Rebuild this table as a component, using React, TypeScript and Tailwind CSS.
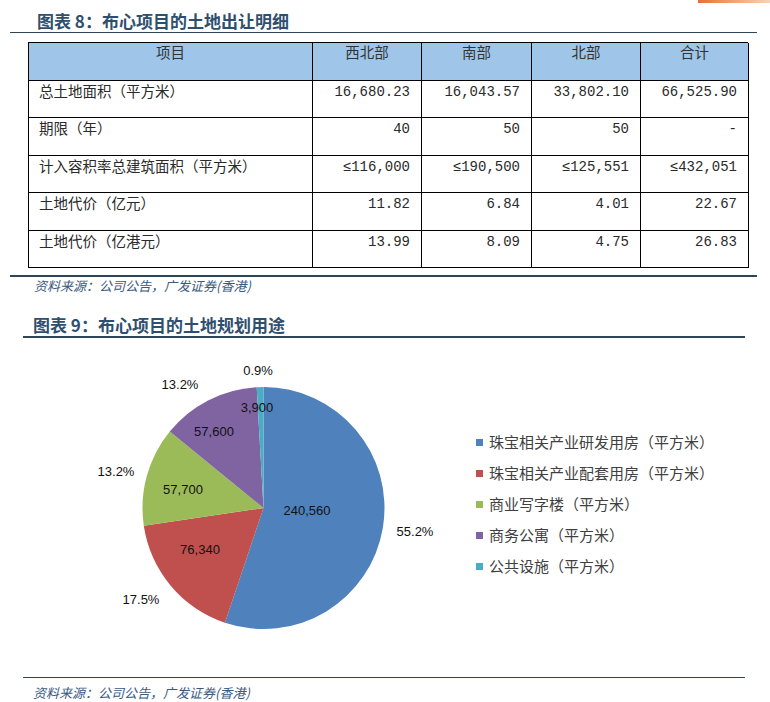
import React from "react"

const rows = [
  { label: "总土地面积（平方米）", vals: ["16,680.23", "16,043.57", "33,802.10", "66,525.90"] },
  { label: "期限（年）", vals: ["40", "50", "50", "-"] },
  { label: "计入容积率总建筑面积（平方米）", vals: ["≤116,000", "≤190,500", "≤125,551", "≤432,051"] },
  { label: "土地代价（亿元）", vals: ["11.82", "6.84", "4.01", "22.67"] },
  { label: "土地代价（亿港元）", vals: ["13.99", "8.09", "4.75", "26.83"] },
]

const slices = [
  { value: 240560, color: "#4f81bd", name: "珠宝相关产业研发用房（平方米）" },
  { value: 76340, color: "#c0504d", name: "珠宝相关产业配套用房（平方米）" },
  { value: 57700, color: "#9bbb59", name: "商业写字楼（平方米）" },
  { value: 57600, color: "#8064a2", name: "商务公寓（平方米）" },
  { value: 3900, color: "#4bacc6", name: "公共设施（平方米）" },
]

// label spots taken from the reference
const inner = [
  { t: "240,560", x: 307, y: 172 },
  { t: "76,340", x: 200, y: 211 },
  { t: "57,700", x: 183, y: 151 },
  { t: "57,600", x: 214, y: 93 },
  { t: "3,900", x: 257, y: 69 },
]
const outer = [
  { t: "55.2%", x: 415, y: 193 },
  { t: "17.5%", x: 141, y: 261 },
  { t: "13.2%", x: 116, y: 133 },
  { t: "13.2%", x: 180, y: 46 },
  { t: "0.9%", x: 258, y: 32 },
]

function Pie() {
  const cx = 263.5
  const cy = 170
  const r = 121
  const total = slices.reduce((s, d) => s + d.value, 0)
  let acc = 0
  const pt = (f: number) => [cx + r * Math.sin(2 * Math.PI * f), cy - r * Math.cos(2 * Math.PI * f)]

  return (
    <svg width="460" height="339" viewBox="0 0 460 339" className="shrink-0">
      {slices.map((s, i) => {
        const f0 = acc / total
        acc += s.value
        const f1 = acc / total
        const [x0, y0] = pt(f0)
        const [x1, y1] = pt(f1)
        const large = f1 - f0 > 0.5 ? 1 : 0
        return (
          <path
            key={i}
            d={`M ${cx} ${cy} L ${x0} ${y0} A ${r} ${r} 0 ${large} 1 ${x1} ${y1} Z`}
            fill={s.color}
          />
        )
      })}
      {[...inner, ...outer].map((l, i) => (
        <text
          key={i}
          x={l.x}
          y={l.y}
          textAnchor="middle"
          dominantBaseline="central"
          fontFamily="'Liberation Sans', Arial, sans-serif"
          fontSize="13"
          fill="#111"
        >
          {l.t}
        </text>
      ))}
    </svg>
  )
}

export default function App() {
  return (
    <div className="w-[770px] h-[702px] bg-white overflow-hidden font-['Noto_Sans_CJK_SC',sans-serif]">
      <div className="flex justify-end h-[3px]">
        <div className="w-[72px] h-[3px] bg-gradient-to-r from-[#e86f2d] to-[#f7d2b8]" />
      </div>

      {/* 图表 8 */}
      <h2 className="pl-[37px] pt-[7px] text-[17px] leading-[22px] font-bold text-[#2f4f6f]">
        图表 8：布心项目的土地出让明细
      </h2>
      <div className="ml-[10px] w-[747px] h-px bg-[#2e4557]" />

      <div className="ml-[28px] mt-[9px] w-[720px] grid grid-cols-[284px_109px_110px_109px_108px] border-l border-t border-black">
        {["项目", "西北部", "南部", "北部", "合计"].map((h) => (
          <div
            key={h}
            className="h-[37.5px] border-r border-b border-black bg-[#9fc5e8] text-center text-[14.5px] leading-[18px] text-[#333]"
          >
            {h}
          </div>
        ))}
        {rows.map((row) => (
          <React.Fragment key={row.label}>
            <div className="h-[37.5px] border-r border-b border-black pl-[10px] pt-[1px] text-[14.5px] leading-[18px] text-[#2a2a2a]">
              {row.label}
            </div>
            {row.vals.map((v, i) => (
              <div
                key={i}
                className="h-[37.5px] border-r border-b border-black pr-[11px] pt-[2px] text-right font-['Liberation_Mono',monospace] text-[14px] leading-[18px] text-[#2a2a2a]"
              >
                {v}
              </div>
            ))}
          </React.Fragment>
        ))}
      </div>

      <div className="ml-[10px] mt-[7px] w-[747px] h-[2px] bg-[#2e4557]" />
      <p className="pl-[34px] text-[13px] leading-[17px] italic text-[#3a5a80]">资料来源：公司公告，广发证券(香港)</p>

      {/* 图表 9 */}
      <h2 className="pl-[33px] mt-[20px] text-[17px] leading-[22px] font-bold text-[#2f4f6f]">
        图表 9：布心项目的土地规划用途
      </h2>
      <div className="ml-[23px] w-[722px] h-[2px] bg-[#2e4557]" />

      <div className="flex h-[339px]">
        <Pie />
        <div className="pl-[16px] pt-[89px] flex flex-col">
          {slices.map((s) => (
            <div key={s.name} className="h-[31px] flex items-center gap-[6px]">
              <span className="w-[7px] h-[7px] shrink-0" style={{ backgroundColor: s.color }} />
              <span className="text-[15px] text-[#404040]">{s.name}</span>
            </div>
          ))}
        </div>
      </div>

      <div className="ml-[23px] w-[722px] h-px bg-[#2e4557]" />
      <p className="pl-[33px] mt-[6px] text-[13px] leading-[17px] italic text-[#3a5a80]">资料来源：公司公告，广发证券(香港)</p>
    </div>
  )
}
